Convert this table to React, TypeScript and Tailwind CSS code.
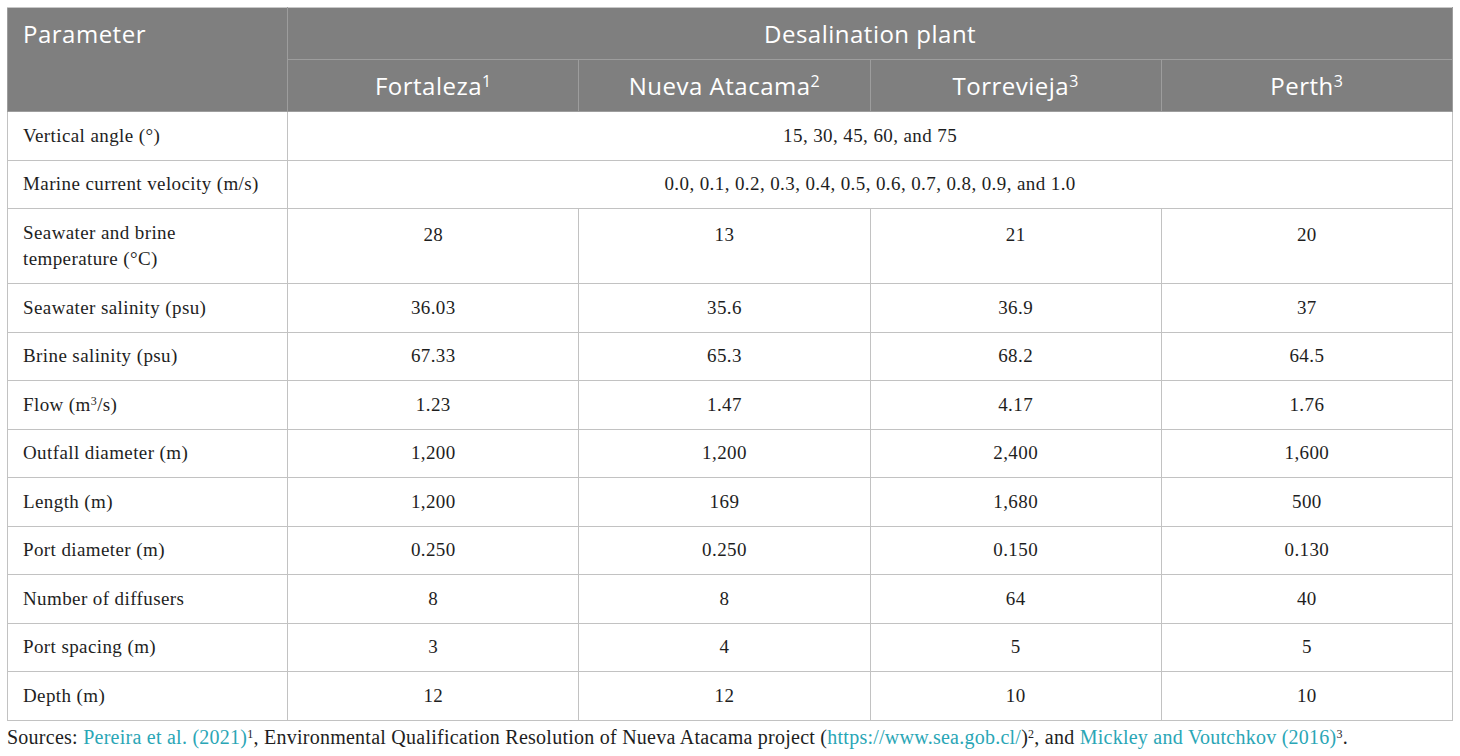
const rows: { label: React.ReactNode; values: string[] | string; tall?: boolean }[] = [
  { label: "Vertical angle (°)", values: "15, 30, 45, 60, and 75" },
  { label: "Marine current velocity (m/s)", values: "0.0, 0.1, 0.2, 0.3, 0.4, 0.5, 0.6, 0.7, 0.8, 0.9, and 1.0" },
  { label: <>Seawater and brine<br />temperature (°C)</>, values: ["28", "13", "21", "20"], tall: true },
  { label: "Seawater salinity (psu)", values: ["36.03", "35.6", "36.9", "37"] },
  { label: "Brine salinity (psu)", values: ["67.33", "65.3", "68.2", "64.5"] },
  { label: <>Flow (m<sup className="text-[12px]">3</sup>/s)</>, values: ["1.23", "1.47", "4.17", "1.76"] },
  { label: "Outfall diameter (m)", values: ["1,200", "1,200", "2,400", "1,600"] },
  { label: "Length (m)", values: ["1,200", "169", "1,680", "500"] },
  { label: "Port diameter (m)", values: ["0.250", "0.250", "0.150", "0.130"] },
  { label: "Number of diffusers", values: ["8", "8", "64", "40"] },
  { label: "Port spacing (m)", values: ["3", "4", "5", "5"] },
  { label: "Depth (m)", values: ["12", "12", "10", "10"] },
];

const plants = [
  { name: "Fortaleza", n: "1" },
  { name: "Nueva Atacama", n: "2" },
  { name: "Torrevieja", n: "3" },
  { name: "Perth", n: "3" },
];

export default function App() {
  return (
    <div className="bg-white w-[1460px] h-[756px] pl-[7px] pt-[7px]">
      <table className="border-collapse w-[1446px] table-fixed">
        <colgroup>
          <col className="w-[280px]" />
          <col className="w-[291px]" />
          <col className="w-[291px]" />
          <col className="w-[291px]" />
          <col className="w-[291px]" />
        </colgroup>
        <thead className="bg-[#7f7f7f] text-white font-['Open_Sans',sans-serif] text-[24px] tracking-[0.5px]">
          <tr className="h-[52px]">
            <th rowSpan={2} className="border border-[#9d9d9d] border-t-[#c8c8c8] align-top text-left font-normal pl-[15px] pt-[8px]">
              Parameter
            </th>
            <th colSpan={4} className="border border-[#9d9d9d] border-t-[#c8c8c8] font-normal">
              Desalination plant
            </th>
          </tr>
          <tr className="h-[52px]">
            {plants.map((p) => (
              <th key={p.name} className="border border-[#9d9d9d] font-normal">
                {p.name}
                <sup className="text-[16px]">{p.n}</sup>
              </th>
            ))}
          </tr>
        </thead>
        <tbody className="font-['Liberation_Serif',serif] text-[19px] tracking-[0.4px] text-[#1e1e1e]">
          {rows.map((r, i) => (
            <tr key={i} className={r.tall ? "h-[75px]" : "h-[48.5px]"}>
              <td className="border border-[#c2c2c2] pl-[15px] leading-[26px]">{r.label}</td>
              {typeof r.values === "string" ? (
                <td colSpan={4} className="border border-[#c2c2c2] text-center">
                  {r.values}
                </td>
              ) : (
                r.values.map((v, j) => (
                  <td key={j} className={`border border-[#c2c2c2] text-center ${r.tall ? "align-top pt-[12px]" : ""}`}>
                    {v}
                  </td>
                ))
              )}
            </tr>
          ))}
        </tbody>
      </table>
      <p className="font-['Liberation_Serif',serif] text-[20px] tracking-[0.25px] text-[#1e1e1e] mt-[1px]">
        Sources: <span className="text-[#2aa6b6]">Pereira et al. (2021)</span>
        <sup className="text-[12px]">1</sup>, Environmental Qualification Resolution of Nueva Atacama project (
        <span className="text-[#2aa6b6]">https://www.sea.gob.cl/</span>)<sup className="text-[12px]">2</sup>, and{" "}
        <span className="text-[#2aa6b6]">Mickley and Voutchkov (2016)</span>
        <sup className="text-[12px]">3</sup>.
      </p>
    </div>
  );
}
